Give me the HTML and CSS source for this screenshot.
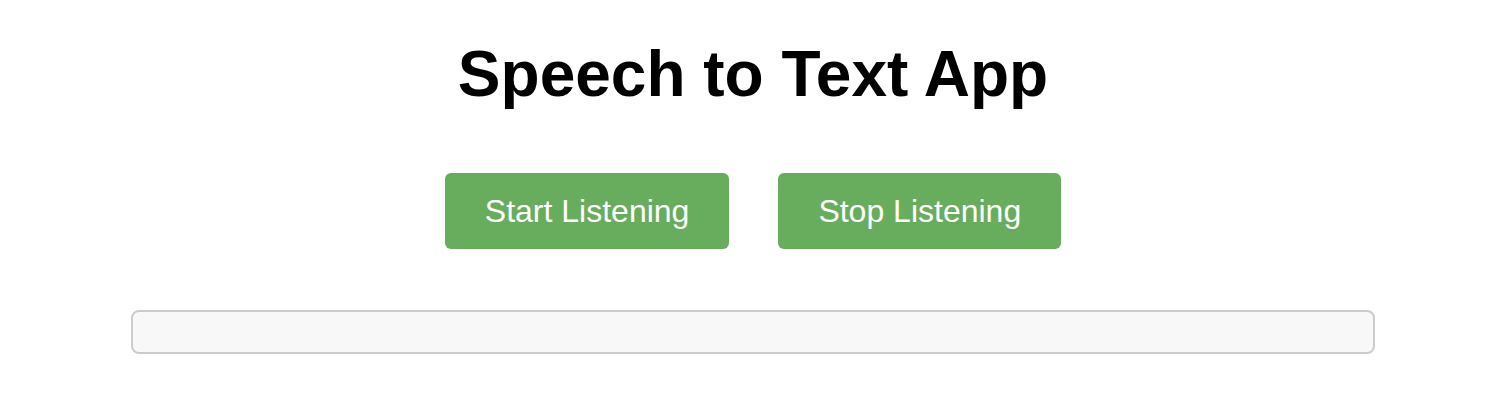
FILE: index.html
```html
<!DOCTYPE html>
<html lang="en">
<head>
<meta charset="utf-8">
<title>Speech to Text App</title>
<link rel="stylesheet" href="styles.css">
</head>
<body>
<main class="app">
  <h1 class="title">Speech to Text App</h1>
  <div class="controls">
    <button class="btn">Start Listening</button>
    <button class="btn">Stop Listening</button>
  </div>
  <div class="output"></div>
</main>
</body>
</html>
```
FILE: styles.css
```css
html, body {
  margin: 0;
  padding: 0;
  background: #ffffff;
}

body {
  font-family: "Liberation Sans", Arial, sans-serif;
  color: #000;
}

.app {
  padding: 37px 113px 0 131px;
  display: flex;
  flex-direction: column;
  align-items: center;
}

.title {
  margin: 0;
  font-size: 64px;
  font-weight: bold;
  line-height: 74px;
}

.controls {
  margin-top: 62px;
  display: flex;
  gap: 49px;
}

.btn {
  font-family: "Liberation Sans", Arial, sans-serif;
  font-size: 32px;
  line-height: 37px;
  color: #ffffff;
  background: #67ad5d;
  border: none;
  border-radius: 6px;
  padding: 20px 40px 19px;
  white-space: nowrap;
  cursor: pointer;
}

.output {
  margin-top: 61px;
  align-self: stretch;
  height: 40px;
  background: #f8f8f8;
  border: 2px solid #cccccc;
  border-radius: 8px;
}
```
